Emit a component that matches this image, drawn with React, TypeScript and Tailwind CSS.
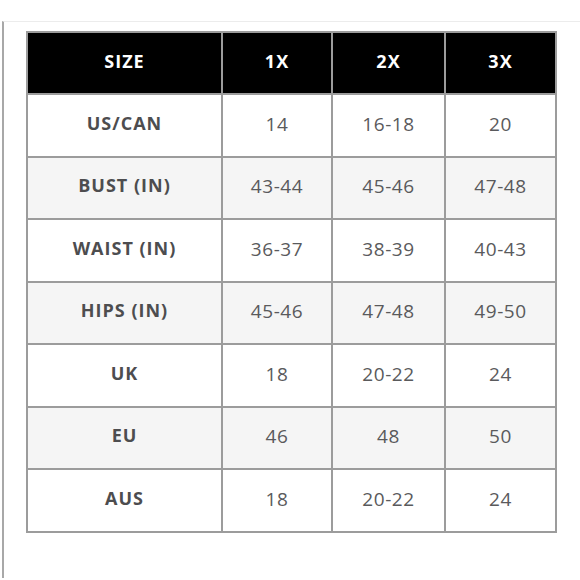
import React from "react";

const cols = ["SIZE", "1X", "2X", "3X"];

const rows: [string, string, string, string][] = [
  ["US/CAN", "14", "16-18", "20"],
  ["BUST (IN)", "43-44", "45-46", "47-48"],
  ["WAIST (IN)", "36-37", "38-39", "40-43"],
  ["HIPS (IN)", "45-46", "47-48", "49-50"],
  ["UK", "18", "20-22", "24"],
  ["EU", "46", "48", "50"],
  ["AUS", "18", "20-22", "24"],
];

export default function App() {
  return (
    <div
      className="w-[580px] h-[580px] bg-white overflow-hidden pt-[21px]"
      style={{ fontFamily: '"Open Sans", "Liberation Sans", sans-serif' }}
    >
      {/* frame: faint top rule, grey left rule */}
      <div className="ml-[2px] h-[557px] border-t border-t-[#ececec] border-l-2 border-l-[#a8a8a8] pl-[22px] pt-[9px]">
        <table className="border-collapse table-fixed w-[529px]">
          <colgroup>
            <col className="w-[195px]" />
            <col className="w-[110px]" />
            <col className="w-[113px]" />
            <col className="w-[111px]" />
          </colgroup>
          <thead>
            <tr className="h-[62px] bg-black">
              {cols.map((c) => (
                <th
                  key={c}
                  className="border-2 border-[#9c9c9c] pb-[4px] text-white text-[18px] font-bold tracking-[1px] text-center"
                >
                  {c}
                </th>
              ))}
            </tr>
          </thead>
          <tbody>
            {rows.map((r, i) => (
              <tr key={r[0]} className={i % 2 === 1 ? "h-[62.5px] bg-[#f5f5f5]" : "h-[62.5px] bg-white"}>
                <td className="border-2 border-[#9c9c9c] pb-[4px] text-center text-[18px] font-bold tracking-[1px] text-[#4d4d4f]">
                  {r[0]}
                </td>
                {r.slice(1).map((v, j) => (
                  <td
                    key={j}
                    className="border-2 border-[#9c9c9c] pb-[3px] text-center text-[19px] text-[#5a5a5c] tracking-[0.6px]"
                  >
                    {v}
                  </td>
                ))}
              </tr>
            ))}
          </tbody>
        </table>
      </div>
    </div>
  );
}
